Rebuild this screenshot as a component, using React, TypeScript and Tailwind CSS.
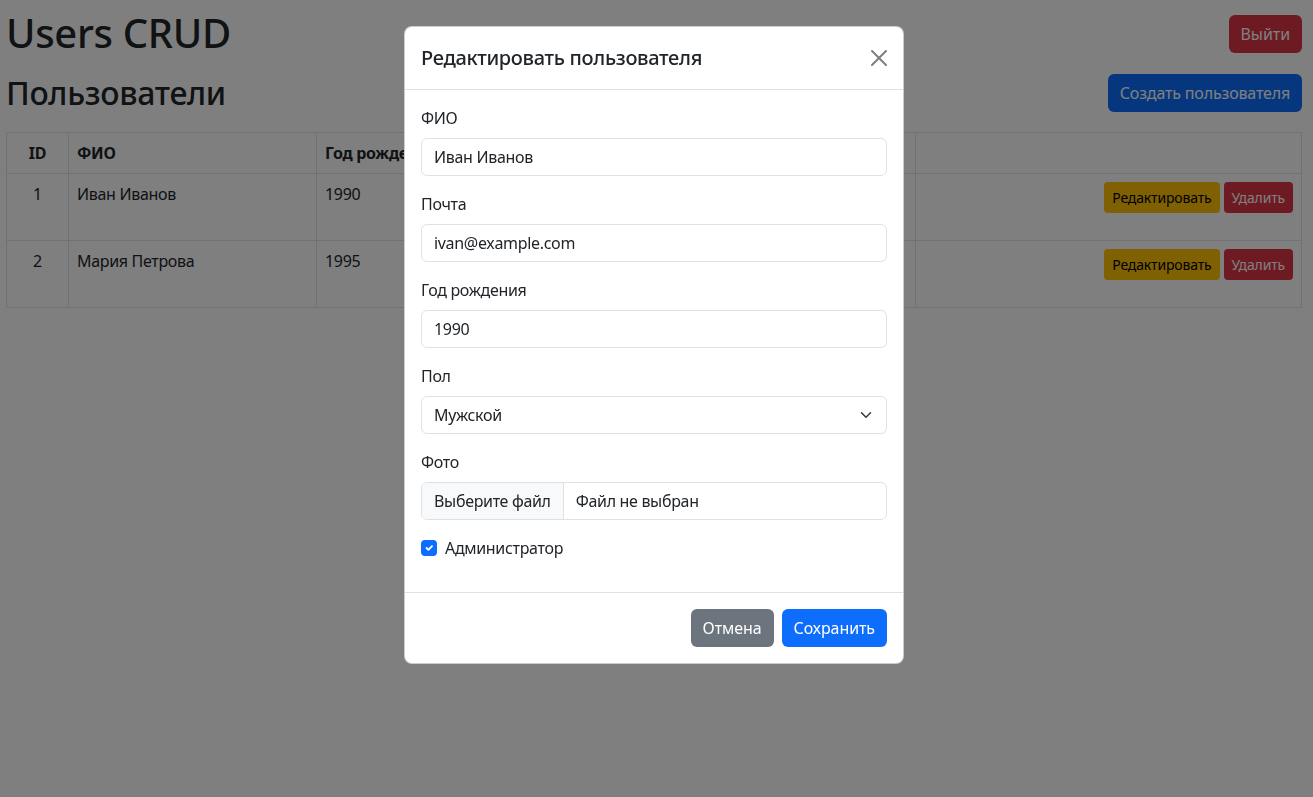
import React from 'react';

const users = [
  { id: 1, name: 'Иван Иванов', year: 1990 },
  { id: 2, name: 'Мария Петрова', year: 1995 },
];

const font = { fontFamily: '"Noto Sans", "Open Sans", sans-serif' };

function Field({ label, children }: { label: string; children: React.ReactNode }) {
  return (
    <div className="mb-4">
      <div className="mb-2 text-base leading-6">{label}</div>
      {children}
    </div>
  );
}

function TextBox({ value }: { value: string }) {
  return (
    <div className="h-[38px] rounded-[6px] border border-[#dee2e6] bg-white px-3 text-base leading-[36px] text-[#212529]">
      {value}
    </div>
  );
}

export default function App() {
  return (
    <div className="relative min-h-[797px] bg-white tracking-[-0.02em] text-[#212529]" style={font}>
      {/* page behind the modal */}
      <div className="pl-[6px] pr-[11px] pt-[9px]">
        <div className="mb-[17px] flex items-center justify-between">
          <h1 className="text-[40px] font-medium leading-[48px]">Users CRUD</h1>
          <button className="mt-[2px] h-[38px] rounded-[6px] bg-[#dc3545] px-3 text-base tracking-[-0.005em] text-white">Выйти</button>
        </div>
        <div className="mb-5 flex items-center justify-between">
          <h2 className="text-[32px] font-medium leading-[38px]">Пользователи</h2>
          <button className="h-[38px] rounded-[6px] bg-[#0d6efd] px-3 text-base tracking-[-0.01em] text-white">Создать пользователя</button>
        </div>
        <table className="w-full table-fixed border-collapse text-base leading-6">
          <thead>
            <tr className="font-bold">
              <th className="w-[62px] border border-[#dee2e6] p-2 text-center">ID</th>
              <th className="w-[248px] border border-[#dee2e6] p-2 text-left">ФИО</th>
              <th className="w-[88px] overflow-hidden whitespace-nowrap border border-[#dee2e6] p-2 text-left">Год рождения</th>
              <th className="w-[200px] border border-[#dee2e6] p-2"></th>
              <th className="w-[90px] border border-[#dee2e6] p-2"></th>
              <th className="w-[80px] border border-[#dee2e6] p-2"></th>
              <th className="w-[141px] border border-[#dee2e6] p-2"></th>
              <th className="border border-[#dee2e6] p-2"></th>
            </tr>
          </thead>
          <tbody>
            {users.map((u) => (
              <tr key={u.id} className="align-top">
                <td className="border border-[#dee2e6] p-2 text-center">{u.id}</td>
                <td className="border border-[#dee2e6] p-2">{u.name}</td>
                <td className="border border-[#dee2e6] p-2">{u.year}</td>
                <td className="border border-[#dee2e6] p-2"></td>
                <td className="border border-[#dee2e6] p-2"></td>
                <td className="border border-[#dee2e6] p-2"></td>
                <td className="border border-[#dee2e6] p-2">
                  <div className="h-[50px] w-[50px] rounded bg-[#e9ecef]" />
                </td>
                <td className="border border-[#dee2e6] p-2">
                  <div className="flex justify-end gap-1 tracking-[-0.01em]">
                    <button className="h-[31px] rounded-[4px] bg-[#ffc107] px-2 text-sm text-black">Редактировать</button>
                    <button className="h-[31px] rounded-[4px] bg-[#dc3545] px-2 text-sm text-white">Удалить</button>
                  </div>
                </td>
              </tr>
            ))}
          </tbody>
        </table>
      </div>

      {/* backdrop */}
      <div className="fixed inset-0 bg-black/50" />

      {/* modal */}
      <div className="fixed inset-0 flex justify-center pr-[5px] pt-[26px]">
        <div className="h-fit w-[500px] overflow-hidden rounded-[8px] border border-black/20 bg-white">
          <div className="flex items-center justify-between border-b border-[#dee2e6] p-4">
            <h5 className="text-xl font-medium leading-[30px]">Редактировать пользователя</h5>
            <svg width="16" height="16" viewBox="0 0 16 16" className="opacity-50">
              <path
                fill="#000"
                d="M.293.293a1 1 0 0 1 1.414 0L8 6.586 14.293.293a1 1 0 1 1 1.414 1.414L9.414 8l6.293 6.293a1 1 0 0 1-1.414 1.414L8 9.414l-6.293 6.293a1 1 0 0 1-1.414-1.414L6.586 8 .293 1.707a1 1 0 0 1 0-1.414"
              />
            </svg>
          </div>

          <div className="p-4">
            <Field label="ФИО">
              <TextBox value="Иван Иванов" />
            </Field>
            <Field label="Почта">
              <TextBox value="ivan@example.com" />
            </Field>
            <Field label="Год рождения">
              <TextBox value="1990" />
            </Field>
            <Field label="Пол">
              <div className="flex h-[38px] items-center justify-between rounded-[6px] border border-[#dee2e6] px-3">
                <span>Мужской</span>
                <svg width="16" height="12" viewBox="0 0 16 16" fill="none">
                  <path d="m2 5 6 6 6-6" stroke="#343a40" strokeWidth="2" strokeLinecap="round" strokeLinejoin="round" />
                </svg>
              </div>
            </Field>
            <Field label="Фото">
              <div className="flex h-[38px] overflow-hidden rounded-[6px] border border-[#dee2e6]">
                <div className="border-r border-[#dee2e6] bg-[#f8f9fa] px-3 leading-[36px]">Выберите файл</div>
                <div className="px-3 leading-[36px]">Файл не выбран</div>
              </div>
            </Field>
            <div className="mb-4 flex items-center gap-2 leading-6">
              <span className="flex h-4 w-4 items-center justify-center rounded-[4px] bg-[#0d6efd]">
                <svg width="12" height="12" viewBox="0 0 20 20" fill="none">
                  <path d="m6 10 3 3 6-6" stroke="#fff" strokeWidth="3" strokeLinecap="round" strokeLinejoin="round" />
                </svg>
              </span>
              <span>Администратор</span>
            </div>
          </div>

          <div className="flex justify-end gap-2 border-t border-[#dee2e6] px-3 py-4 pr-4 tracking-[-0.005em]">
            <button className="h-[38px] rounded-[6px] bg-[#6c757d] px-3 text-base text-white">Отмена</button>
            <button className="h-[38px] rounded-[6px] bg-[#0d6efd] px-3 text-base text-white">Сохранить</button>
          </div>
        </div>
      </div>
    </div>
  );
}
